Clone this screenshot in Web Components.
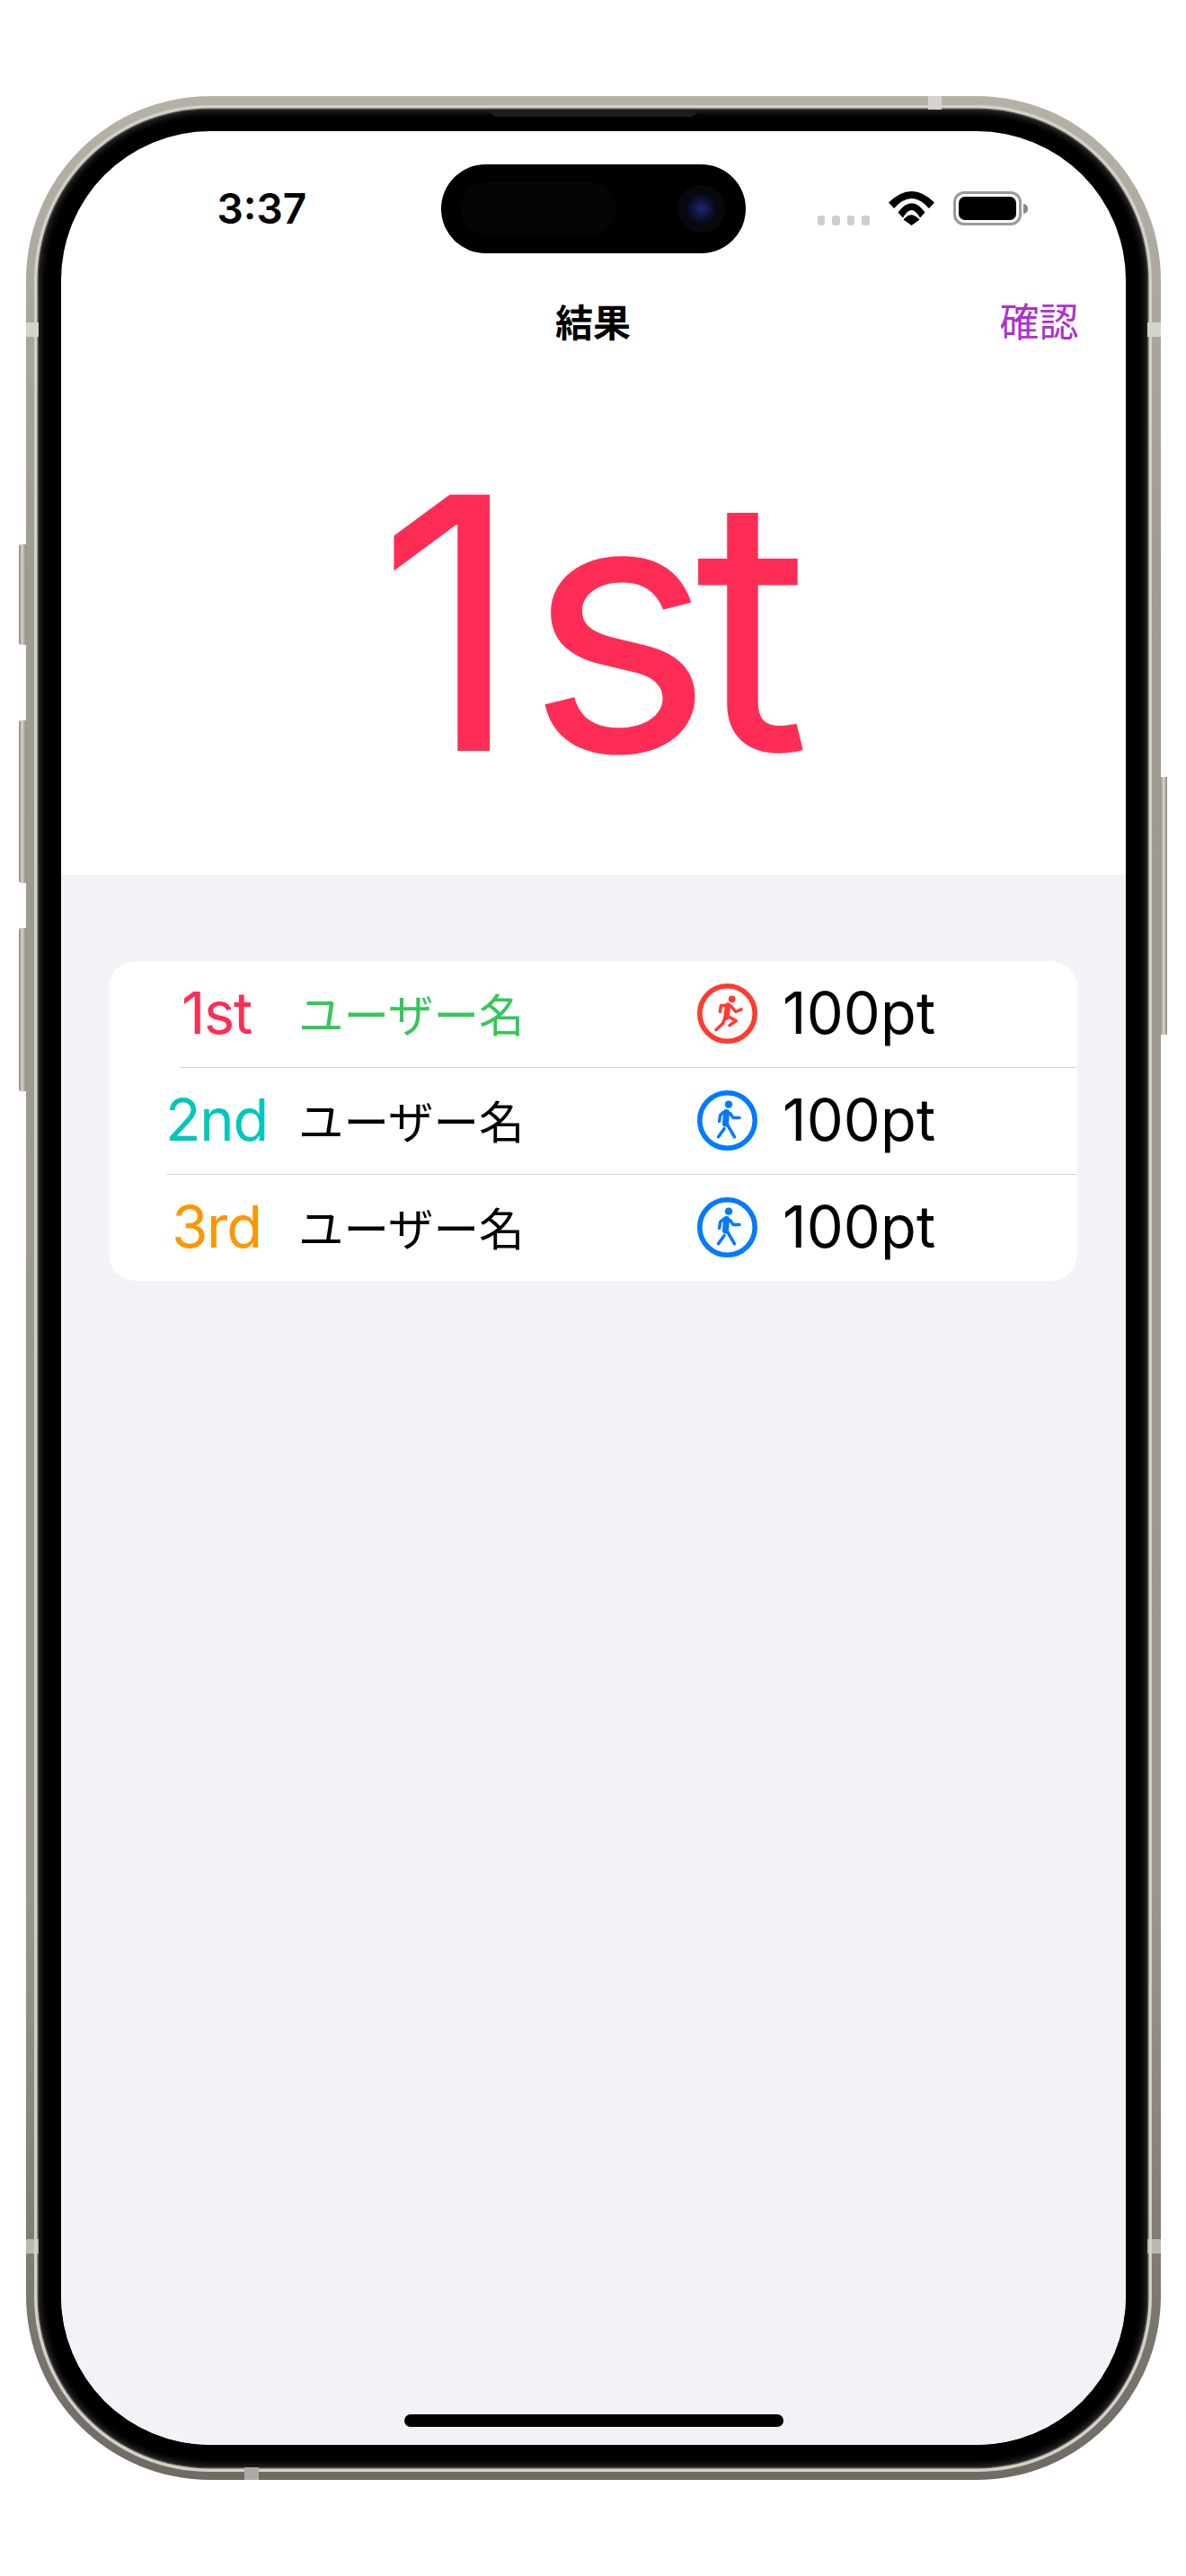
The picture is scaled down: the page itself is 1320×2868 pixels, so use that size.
<!DOCTYPE html>
<html lang="ja">
<head>
<meta charset="UTF-8">
<title>結果</title>
<style>
  html, body { margin: 0; background: #fff; }
  body { padding-top: 107px; font-family: Inter, "Noto Sans CJK JP", sans-serif; }
</style>
</head>
<body>

<phone-frame>
  <status-bar time="3:37"></status-bar>
  <nav-bar title="結果" action="確認"></nav-bar>
  <result-hero text="1st"></result-hero>
  <result-list>
    <result-row rank="1st" rank-color="#ff2d55" name-color="#34c759" activity="run" points="100pt"></result-row>
    <list-separator inset="79"></list-separator>
    <result-row rank="2nd" rank-color="#00c7be" activity="walk" points="100pt"></result-row>
    <list-separator inset="64"></list-separator>
    <result-row rank="3rd" rank-color="#ff9500" activity="walk" points="100pt"></result-row>
  </result-list>
</phone-frame>

<script>
(function (customElements) {
  'use strict';

  class PhoneFrame extends HTMLElement {
    constructor() {
      super();
      this.attachShadow({ mode: 'open' }).innerHTML = `
        <style>
          :host { display: block; position: relative; width: 1263px; margin: 0 auto; }
          .body {
            border-radius: 205px;
            padding: 14.5px;
            background: linear-gradient(#b5b1a7, #9f9b92 20%, #9b978e 75%, #6f6b62);
          }
          .rim {
            position: relative;
            padding: 24.5px;
            border-radius: 190px;
            background: #000;
            box-shadow: 0 0 0 1.5px #55534d, 0 0 0 5px #d3d0c8;
          }
          .rim::before {
            content: "";
            position: absolute;
            inset: 0;
            border-radius: 190px;
            box-shadow: inset 0 0 8px 1px #3c3c3c;
          }
          .screen {
            position: relative;
            display: flex;
            flex-direction: column;
            height: 2576px;
            border-radius: 166px;
            overflow: hidden;
            background: #fff;
          }
          .speaker {
            position: absolute;
            left: 502px;
            top: 0;
            width: 231px;
            height: 8px;
            border-radius: 0 0 8px 8px;
            background: #1e1e1e;
          }
          .island {
            position: absolute;
            left: 423px;
            top: 37px;
            width: 339px;
            height: 99px;
            border-radius: 50px;
            background: #000;
          }
          .sensor {
            position: absolute;
            left: 21px;
            top: 20px;
            width: 174px;
            height: 59px;
            border-radius: 30px;
            background: #050505;
          }
          .camera {
            position: absolute;
            left: 263px;
            top: 23px;
            width: 53px;
            height: 53px;
            border-radius: 50%;
            background: radial-gradient(circle at 50% 50%, #1d2a6a 0, #10143c 26%, #08080f 46%, #07060c 100%);
          }
          .home {
            position: absolute;
            left: 382px;
            bottom: 20px;
            width: 422px;
            height: 14px;
            border-radius: 7px;
            background: #000;
          }
          .seam { position: absolute; background: #d6d3cc; }
          .key {
            position: absolute;
            left: -7.5px;
            width: 8px;
            border-radius: 3px 0 0 3px;
            background: linear-gradient(90deg, #86837c, #d6d3cc 45%, #8f8c84);
          }
          .key.right { left: auto; right: -7.5px; border-radius: 0 3px 3px 0; transform: scaleX(-1); }
        </style>
        <div class="key" style="top:499px;height:112px"></div>
        <div class="key" style="top:695px;height:181px"></div>
        <div class="key" style="top:926px;height:182px"></div>
        <div class="key right" style="top:758px;height:287px"></div>
        <div class="body">
          <div class="rim">
            <div class="speaker"></div>
            <div class="screen">
              <slot></slot>
              <div class="island">
                <div class="sensor"></div>
                <div class="camera"></div>
              </div>
              <div class="home"></div>
            </div>
          </div>
        </div>
        <div class="seam" style="left:0;top:252px;width:14.5px;height:16px"></div>
        <div class="seam" style="right:0;top:252px;width:14.5px;height:16px"></div>
        <div class="seam" style="left:0;top:2386px;width:14.5px;height:16px;opacity:.7"></div>
        <div class="seam" style="right:0;top:2386px;width:14.5px;height:16px;opacity:.7"></div>
        <div class="seam" style="left:1004px;top:0;width:15px;height:14.5px"></div>
        <div class="seam" style="left:243.5px;bottom:0;width:16px;height:14.5px;background:#aeaaa2"></div>
      `;
    }
  }

  class StatusBar extends HTMLElement {
    constructor() {
      super();
      this.attachShadow({ mode: 'open' }).innerHTML = `
        <style>
          :host {
            display: flex;
            align-items: flex-end;
            justify-content: space-between;
            height: 154px;
            box-sizing: border-box;
            padding: 67px 109px 49px 174px;
          }
          .time { font: 600 46px/38px Inter, sans-serif; color: #000; }
          .icons { display: flex; align-items: flex-end; gap: 21px; }
          .dots { display: flex; gap: 8px; }
          .dots i { width: 8.5px; height: 11px; border-radius: 3px; background: #cdcdcd; }
          svg { display: block; }
          .battery { display: flex; align-items: center; gap: 2px; }
          .cell {
            width: 76px;
            height: 38px;
            box-sizing: border-box;
            padding: 3px;
            border: 3px solid #9a9a9a;
            border-radius: 12px;
          }
          .cell div { height: 100%; border-radius: 7px; background: #000; }
          .nub { width: 5px; height: 11px; border-radius: 0 6px 6px 0; background: #8a8a8a; }
        </style>
        <div class="time"></div>
        <div class="icons">
          <div class="dots"><i></i><i></i><i></i><i></i></div>
          <svg width="51" height="38" viewBox="0 0 51 38">
            <path d="M0 12.5Q25.5 -12.5 51 12.5L45 19Q25.5 -3 6 19Z"/>
            <path d="M10.5 23.5Q25.5 3 40.5 23.5L35 29.5Q25.5 12.5 16 29.5Z"/>
            <path d="M16.5 31.5Q25.5 21 34.5 31.5L25.5 38Z"/>
          </svg>
          <div class="battery"><div class="cell"><div></div></div><div class="nub"></div></div>
        </div>
      `;
      this.shadowRoot.querySelector('.time').textContent = this.getAttribute('time');
    }
  }

  class NavBar extends HTMLElement {
    constructor() {
      super();
      this.attachShadow({ mode: 'open' }).innerHTML = `
        <style>
          :host {
            display: grid;
            grid-template-columns: 1fr auto 1fr;
            align-items: center;
            height: 112px;
            padding: 0 52px 2px;
            font-family: Inter, "Noto Sans CJK JP", sans-serif;
          }
          .title { font-size: 42px; font-weight: 700; color: #000; }
          .action { font-size: 44px; font-weight: 400; color: #af2fd0; text-align: right; }
        </style>
        <div></div>
        <div class="title"></div>
        <div class="action"></div>
      `;
      this.shadowRoot.querySelector('.title').textContent = this.getAttribute('title');
      this.shadowRoot.querySelector('.action').textContent = this.getAttribute('action');
    }
  }

  class ResultHero extends HTMLElement {
    constructor() {
      super();
      this.attachShadow({ mode: 'open' }).innerHTML = `
        <style>
          :host {
            display: flex;
            align-items: center;
            justify-content: center;
            height: 560px;
            padding-right: 18px;
            color: #ff2d55;
          }
          .text { font: 375 392px/1 Inter, sans-serif; letter-spacing: -0.05em; }
          .text::first-letter { margin-right: 26px; }
        </style>
        <div class="text"></div>
      `;
      this.shadowRoot.querySelector('.text').textContent = this.getAttribute('text');
    }
  }

  class ResultList extends HTMLElement {
    constructor() {
      super();
      this.attachShadow({ mode: 'open' }).innerHTML = `
        <style>
          :host { display: block; flex: 1; padding: 96px 53.5px 0; background: #f2f2f7; }
          .card { border-radius: 30px; background: #fff; overflow: hidden; }
        </style>
        <div class="card"><slot></slot></div>
      `;
    }
  }

  class ListSeparator extends HTMLElement {
    constructor() {
      super();
      this.attachShadow({ mode: 'open' }).innerHTML = `
        <style>
          :host { display: block; height: 1.5px; background: #d6d6d8; }
        </style>
      `;
      this.style.marginLeft = this.getAttribute('inset') + 'px';
    }
  }

  const FIGURES = {
    run: `<g stroke-width="3.5">
            <path d="M33 24.5H26.5L25.4 31.5"/>
            <path d="M37.5 25L42.8 31.5L49 28.8"/>
            <path d="M31.6 37L28.3 44.7L21 51.6"/>
            <path d="M35 37L43.3 41.5L36 46.6"/>
          </g>
          <path d="M34 24.5L32.5 37.5" stroke-width="6.5"/>
          <circle cx="38.7" cy="17.3" r="3.9" fill="currentColor" stroke="none"/>`,
    walk: `<g stroke-width="3.5">
            <path d="M29 24.5L25.7 27.5L24.6 34.5"/>
            <path d="M36.5 25.5L40 30.5H47"/>
            <path d="M30 42.7L23.5 51.8"/>
            <path d="M32 35.5L41.5 51.8"/>
          </g>
          <path d="M32.5 24.5L31.5 37" stroke-width="7"/>
          <circle cx="35" cy="15.7" r="4.1" fill="currentColor" stroke="none"/>`
  };

  class ActivityIcon extends HTMLElement {
    constructor() {
      super();
      const kind = this.getAttribute('kind');
      this.attachShadow({ mode: 'open' }).innerHTML = `
        <style>
          :host { display: block; width: 67px; height: 67px; color: ${kind === 'run' ? '#ff3b30' : '#007aff'}; }
          svg { display: block; fill: none; stroke: currentColor; stroke-linecap: round; stroke-linejoin: round; }
        </style>
        <svg width="67" height="67" viewBox="0 0 67 67">
          <circle cx="33.5" cy="33.5" r="30.7" stroke-width="5.6"/>
          ${FIGURES[kind]}
        </svg>
      `;
    }
  }

  class ResultRow extends HTMLElement {
    constructor() {
      super();
      this.attachShadow({ mode: 'open' }).innerHTML = `
        <style>
          :host {
            display: grid;
            grid-template-columns: 146px 462px 67px auto;
            align-items: center;
            height: 117.5px;
            box-sizing: border-box;
            padding: 0 0 2px 47px;
            font-family: Inter, "Noto Sans CJK JP", sans-serif;
            color: #000;
          }
          .rank { font-size: 65px; text-align: center; letter-spacing: -0.02em; }
          .name { padding: 0 0 2px 18px; font-size: 50.5px; }
          .points { padding-left: 28px; font-size: 65px; letter-spacing: 0.003em; }
          activity-icon { margin-top: 2px; }
        </style>
        <div class="rank"></div>
        <div class="name">ユーザー名</div>
        <activity-icon kind="${this.getAttribute('activity')}"></activity-icon>
        <div class="points"></div>
      `;
      const root = this.shadowRoot;
      const rank = root.querySelector('.rank');
      rank.textContent = this.getAttribute('rank');
      rank.style.color = this.getAttribute('rank-color');
      if (this.hasAttribute('name-color')) {
        root.querySelector('.name').style.color = this.getAttribute('name-color');
      }
      root.querySelector('.points').textContent = this.getAttribute('points');
    }
  }

  customElements.define('phone-frame', PhoneFrame);
  customElements.define('status-bar', StatusBar);
  customElements.define('nav-bar', NavBar);
  customElements.define('result-hero', ResultHero);
  customElements.define('result-list', ResultList);
  customElements.define('list-separator', ListSeparator);
  customElements.define('activity-icon', ActivityIcon);
  customElements.define('result-row', ResultRow);
})(window.customElements);
</script>
</body>
</html>
